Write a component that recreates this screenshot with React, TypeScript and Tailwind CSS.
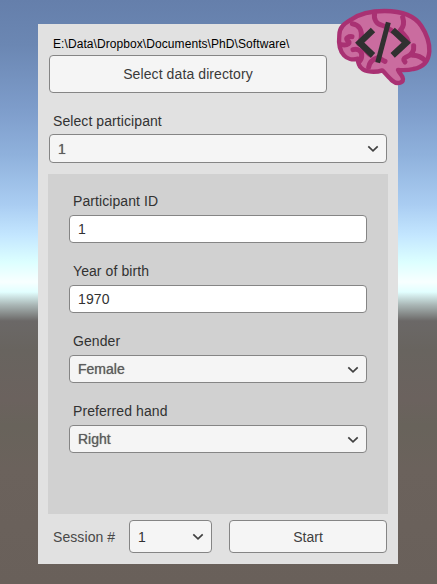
import type { ReactNode } from "react";

function Chevron() {
  return (
    <svg width="12" height="8" viewBox="0 0 12 8" fill="none" className="mt-px shrink-0">
      <path d="M1.3 1.4L6 5.8L10.7 1.4" stroke="#404040" strokeWidth="1.7" />
    </svg>
  );
}

const box =
  "flex items-center rounded-[4px] border border-[#858585] text-[14px] leading-[16px]";

function Label({ children, className = "pt-[6px]" }: { children: ReactNode; className?: string }) {
  return (
    <div className={`${className} h-[28px] pl-[4px] text-[14px] leading-[16px] tracking-[0.08px] text-[#323232]`}>
      {children}
    </div>
  );
}

function Dropdown({ value, height = "h-[28px]" }: { value: string; height?: string }) {
  return (
    <div className={`${box} ${height} justify-between bg-[#f5f5f5] pl-[8px] pr-[7px] text-[#5c5c5c]`}>
      <span className="[text-shadow:0_0_0.8px_#777]">{value}</span>
      <Chevron />
    </div>
  );
}

function Input({ value }: { value: string }) {
  return (
    <div className={`${box} h-[28px] bg-white pl-[8px] tracking-[0.1px] text-[#323232]`}>{value}</div>
  );
}

function BrainLogo() {
  return (
    <svg className="absolute left-[330px] top-0" width="107" height="90" viewBox="0 0 321 270" fill="none">
      <path
        d="M28 105C28 81 44 70 63 59C87 42 123 33 164 33C221 33 254 47 274 78C292 105 299 130 298 154C296 184 278 202 250 207C236 211 218 211 204 210C207 220 219 226 219 237C219 246 211 249 203 249C188 249 176 230 157 211C137 218 107 217 94 204C85 196 84 187 84 176C68 181 51 176 42 166C28 151 25 132 28 105Z"
        fill="#ca6c9f"
        stroke="#a93173"
        strokeWidth="13"
        strokeLinejoin="round"
      />
      <g stroke="#a93173" strokeWidth="15" strokeLinecap="round">
        <path d="M67 71C88 74 96 91 94 112C93 122 91 126 87 132" />
        <path d="M34 134C54 138 64 128 52 121C47 114 55 109 66 110" />
        <path d="M134 39C130 58 140 72 157 76C176 80 180 96 200 98" />
        <path d="M218 52C224 70 220 81 212 90C217 104 230 106 234 124" />
        <path d="M69 149C84 145 97 153 95 169C94 178 91 182 86 186" />
        <path d="M116 202C118 184 132 176 145 172C153 177 158 181 165 184" />
        <path d="M251 137C253 154 244 166 229 171C220 175 219 181 225 186" />
        <path d="M248 166C266 165 277 174 287 183" />
        <path d="M96 137C104 151 112 157 121 165" />
      </g>
      <g stroke="#303030">
        <path d="M129 90L89 128L129 166" strokeWidth="19" />
        <path d="M188 90L229 128L188 166" strokeWidth="19" />
        <path d="M175 67L143 188" strokeWidth="15" />
      </g>
    </svg>
  );
}

export default function App() {
  return (
    <main className="relative flex h-[584px] w-[437px] overflow-hidden bg-[linear-gradient(to_bottom,#657fab_0px,#6b87b3_45px,#7e9dcb_110px,#8fb1dc_155px,#aacdf2_205px,#c3e6ff_235px,#dcffff_262px,#f8ffff_282px,#e2ffff_292px,#a9b6b5_305px,#6b6867_321px,#68645f_350px,#6b625e_400px,#68635b_425px,#6b625c_470px,#69605a_584px)] pl-[38px] pt-[24px] font-['Liberation_Sans',Arial,sans-serif]">
      <section className="flex h-[540px] w-[360px] flex-col bg-[#e1e1e1] px-[10px]">
        <div className="flex h-[31px] items-center whitespace-nowrap pl-[5px] pt-[9px] text-[12px] leading-[14px] tracking-[0.075px] text-black">
          E:\Data\Dropbox\Documents\PhD\Software\
        </div>
        <button className={`${box} ml-[1px] h-[38px] w-[278px] justify-center bg-[#f5f5f5] tracking-[0.1px] text-[#3a3a3a]`}>
          Select data directory
        </button>
        <div className="mx-[1px] pt-[13px]">
          <Label className="pt-[7px]">Select participant</Label>
          <Dropdown value="1" height="h-[29px]" />
        </div>
        <div className="mt-[11px] h-[340px] bg-[#d1d1d1] px-[21px] pt-[13px]">
          <div className="flex flex-col gap-[14px]">
            <div><Label>Participant ID</Label><Input value="1" /></div>
            <div><Label>Year of birth</Label><Input value="1970" /></div>
            <div><Label>Gender</Label><Dropdown value="Female" /></div>
            <div><Label>Preferred hand</Label><Dropdown value="Right" /></div>
          </div>
        </div>
        <div className="flex items-center pl-[5px] pt-[6px]">
          <span className="w-[76px] text-[14px] leading-[16px] tracking-[0.08px] text-[#484848]">Session #</span>
          <div className={`${box} h-[33px] w-[83px] justify-between bg-[#f5f5f5] pl-[8px] pr-[7px] text-[#323232]`}>
            <span>1</span>
            <Chevron />
          </div>
          <button className={`${box} ml-[17px] h-[33px] w-[158px] justify-center bg-[#f5f5f5] text-[#404040]`}>
            Start
          </button>
        </div>
      </section>
      <BrainLogo />
    </main>
  );
}
